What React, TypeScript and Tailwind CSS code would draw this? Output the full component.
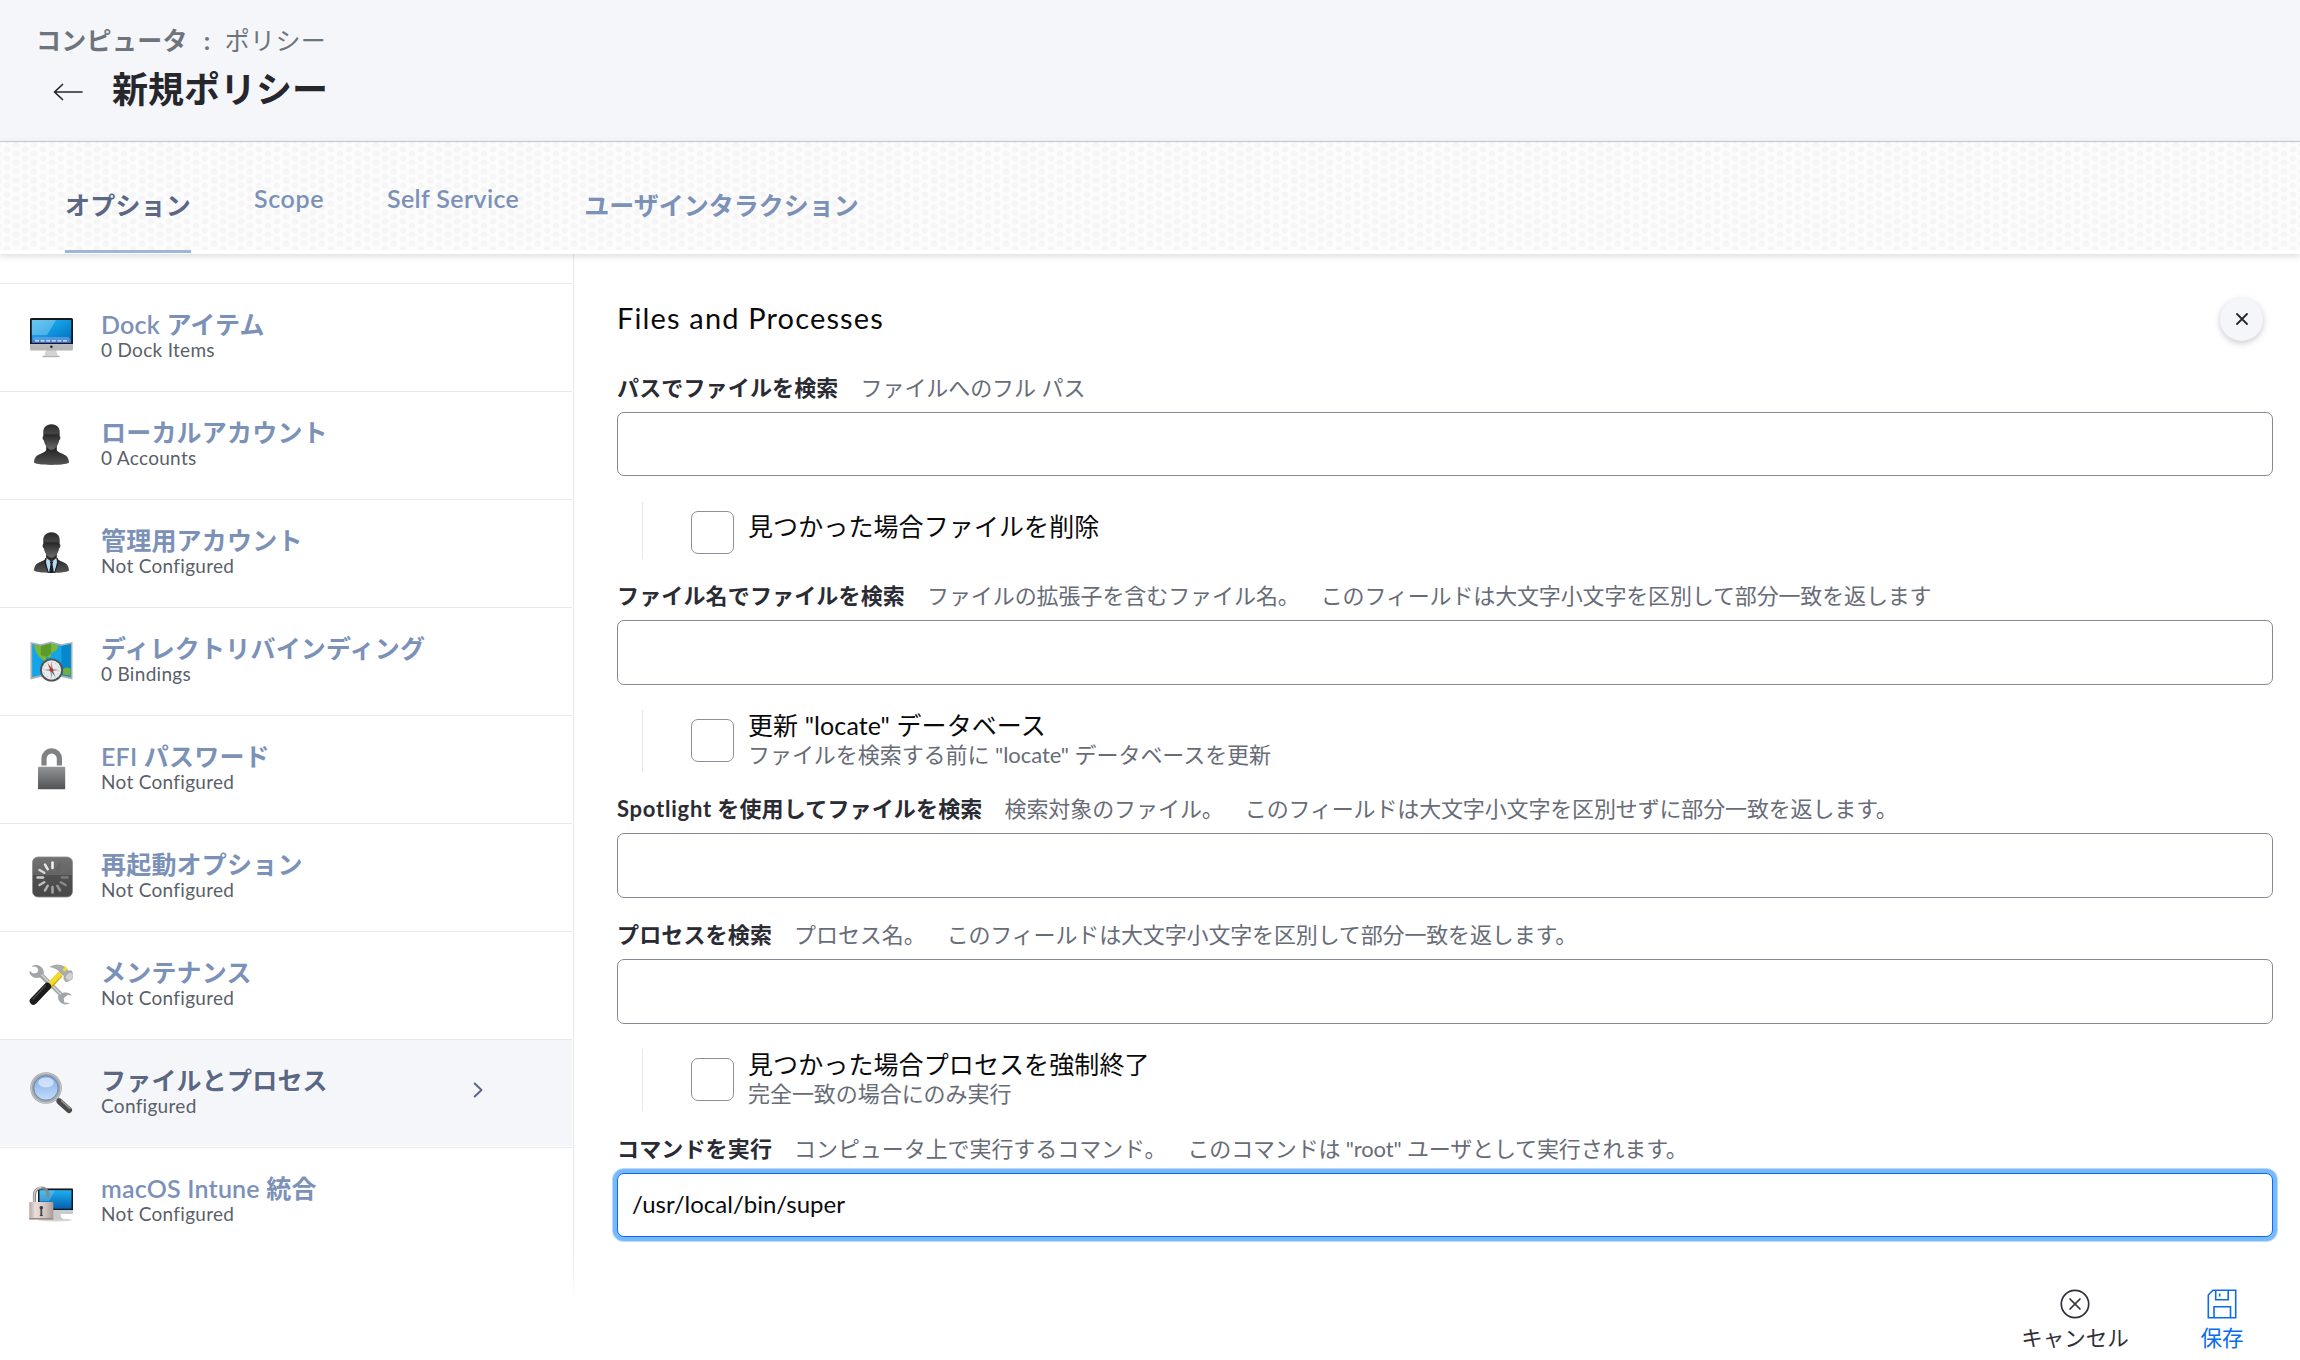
import type { ReactNode } from "react";

function DockIcon() {
  return (
    <svg viewBox="0 0 44 44" className="size-11">
      <defs>
        <linearGradient id="dock-screen" x1="0" y1="0" x2="1" y2="1">
          <stop offset="0" stopColor="#35b5ef" />
          <stop offset="0.5" stopColor="#0f97e0" />
          <stop offset="1" stopColor="#0667b8" />
        </linearGradient>
        <linearGradient id="dock-chin" x1="0" y1="0" x2="0" y2="1">
          <stop offset="0" stopColor="#dcdcdc" />
          <stop offset="1" stopColor="#b4b4b4" />
        </linearGradient>
      </defs>
      <path d="M17 35h10l1.5 5 2 1.2v.8h-17v-.8l2-1.2z" fill="#d2d2d2" />
      <path d="M13.5 41.2h17v1h-17z" fill="#a9a9a9" />
      <rect x="1" y="3" width="43" height="32.6" rx="1.6" fill="url(#dock-chin)" />
      <path d="M1 29V4.6Q1 3 2.6 3h39.8Q44 3 44 4.6V29z" fill="#16181c" />
      <rect x="2.8" y="5" width="39.4" height="22.8" fill="url(#dock-screen)" />
      <path d="M2.8 5H27L18 20H2.8z" fill="#fff" opacity="0.25" />
      <path d="M5 22h35l2 4.500H3z" fill="#6ba3e2" opacity="0.7" />
      <path d="M3.2 25.6h38.6v2.2H3.2z" fill="#4d6fd0" />
      <path d="M6 25.800h34" stroke="#e6f0ff" strokeWidth="1.300" strokeDasharray="4 1.600" />
      <circle cx="22.4" cy="31.8" r="1.3" fill="#26282c" />
    </svg>
  );
}

function Bust({ id }: { id: string }) {
  return (
    <>
      <defs>
        <linearGradient id={id + "-head"} x1="0" y1="0" x2="0" y2="1">
          <stop offset="0" stopColor="#2a2a2b" />
          <stop offset="0.35" stopColor="#454547" />
          <stop offset="0.42" stopColor="#29292a" />
          <stop offset="1" stopColor="#6b6b6c" />
        </linearGradient>
        <linearGradient id={id + "-body"} x1="0" y1="0" x2="0" y2="1">
          <stop offset="0" stopColor="#1b1b1c" />
          <stop offset="0.55" stopColor="#3a3a3b" />
          <stop offset="1" stopColor="#565657" />
        </linearGradient>
      </defs>
      <path
        d="M17.2 22v4.6c0 1.7-1.6 2.6-5 3.8C7.6 32 5 34.6 5 39.6c0 .9 7 2.4 17.5 2.4S40 40.500 40 39.600c0-5-2.600-7.600-7.200-9.200-3.400-1.200-5-2.100-5-3.800V22z"
        fill={"url(#" + id + "-body)"}
      />
      <path
        d="M22.5 1.300c5.600 0 8.300 3.600 8.300 8.300 0 1.500-.2 2.600-.2 3.500 1.200.3 1 3.500-.5 4.400-.8 4.800-4 9.300-7.600 9.300s-6.800-4.500-7.600-9.300c-1.500-.9-1.700-4.100-.5-4.400 0-.9-.2-2-.2-3.500 0-4.700 2.700-8.300 8.300-8.300z"
        fill={"url(#" + id + "-head)"}
      />
    </>
  );
}

function LocalAccountIcon() {
  return (
    <svg viewBox="0 0 44 44" className="size-11">
      <Bust id="local" />
    </svg>
  );
}

function ManagementAccountIcon() {
  return (
    <svg viewBox="0 0 44 44" className="size-11">
      <Bust id="managed" />
      <path d="M17.600 27l4.900 4 4.900-4 .6 4-2.500 11h-6L17 31z" fill="#b5dcf5" />
      <path d="M20.700 30.500h3.600l-.8 2.500 1.500 9h-5l1.500-9z" fill="#1e2022" />
      <path d="M16.800 27l-1 4.500L19.500 42M28.200 27l1 4.500L25.500 42" stroke="#1b1b1c" strokeWidth="1" fill="none" />
    </svg>
  );
}

function DirectoryIcon() {
  return (
    <svg viewBox="0 0 44 44" className="size-11">
      <path d="M1.500 3l10.300 2.200L22 2.600l10.500 2.600L43.500 3v37.500L32.500 38 22 40.500 11.800 38 1.500 40.500z" fill="#a9b0b5" />
      <path d="M3.200 5l8.600 2 10.200-2.500L32.500 7l9.300-2v33l-9.300-2L22 38.500 11.800 36l-8.600 2z" fill="#12a5ea" />
      <path d="M32.500 7l9.300-2v33l-9.300-2z" fill="#0488c9" />
      <path d="M11.800 7L22 4.500v34L11.800 36z" fill="#0b93d8" opacity="0.5" />
      <path d="M4.500 6l7.300 1L22 4.500 29.500 6.500 28 11l-5.500 3-1 4.500-4-.5-1 3.500 5 2-3 1.500-6-5-4.500-5-2.500-6z" fill="#79b83a" />
      <path d="M11.800 7L22 4.500v10l-4.500 3.500-5.700-2z" fill="#5c9a2a" />
      <path d="M34 30l3-1.500 4.500 1v7.500l-7.500-1.500z" fill="#6fb13a" />
      <circle cx="22.500" cy="31" r="11.500" fill="#4f5357" />
      <circle cx="22.500" cy="31" r="9.700" fill="#e9ebec" />
      <circle cx="22.500" cy="31" r="7.700" fill="none" stroke="#b3b6b9" strokeWidth="0.800" strokeDasharray="1.500 2.500" />
      <path d="M22.500 22.500l1.300 7.200 6 1.300-6 1.300-1.300 7.200-1.300-7.200-6-1.300 6-1.300z" fill="#9ea2a5" />
      <path d="M18.500 24l4.900 6.300-1.800 1.400z" fill="#d3282a" />
      <path d="M26.500 38l-4.900-6.300 1.800-1.400z" fill="#6b6f72" />
      <circle cx="22.500" cy="31" r="1.800" fill="#c92a2a" />
    </svg>
  );
}

function LockIcon() {
  return (
    <svg viewBox="0 0 44 44" className="size-11">
      <defs>
        <linearGradient id="efi-lock" x1="0" y1="0" x2="0" y2="1">
          <stop offset="0" stopColor="#949597" />
          <stop offset="1" stopColor="#515254" />
        </linearGradient>
      </defs>
      <path d="M15 18.500v-6.800a7.700 7.900 0 0 1 15.400 0v6.800" fill="none" stroke="#808183" strokeWidth="5.200" />
      <rect x="9" y="19.800" width="27.200" height="22.500" rx="0.800" fill="url(#efi-lock)" />
    </svg>
  );
}

const spokes = [
  "#f4f4f4", "#626262", "#6a6a6a", "#7c7c7c", "#8a8a8a", "#969696",
  "#a4a4a4", "#b2b2b2", "#c0c0c0", "#cecece", "#dadada", "#e8e8e8",
];

function RestartIcon() {
  return (
    <svg viewBox="0 0 44 44" className="size-11">
      <defs>
        <linearGradient id="restart-bg" x1="0" y1="0" x2="0" y2="1">
          <stop offset="0" stopColor="#727272" />
          <stop offset="0.440" stopColor="#646464" />
          <stop offset="0.460" stopColor="#505050" />
          <stop offset="1" stopColor="#484848" />
        </linearGradient>
      </defs>
      <rect x="3.500" y="2" width="40" height="40" rx="5.500" fill="url(#restart-bg)" stroke="#8b8b8b" strokeWidth="0.800" />
      {spokes.map((c, i) => (
        <path key={c} d="M23.500 13V7.500" stroke={c} strokeWidth="2.500" strokeLinecap="round" transform={`rotate(${i * 30} 23.500 22.500)`} />
      ))}
    </svg>
  );
}

function MaintenanceIcon() {
  return (
    <svg viewBox="0 0 44 44" className="size-11">
      <path
        d="M2.500 3.500C5 1.600 9 1.500 12 3.800c2.600 2.200 3.200 4.800 2.700 7.500L33.500 30c3.500-1.200 7.500-.2 9.500 2.600l-4.500-.6-3.800 3.200.6 4.300 5.400.6c-2.500 1.900-6.700 1.900-9.400-.8-2.300-2.200-2.700-4.700-1.800-7.200L11 14.500c-3.300 1-6.500.4-8.700-1.700C.6 11.200.3 9.300.7 7.800L4 10.500l4.300-.8 1-3.500L7 3.700z"
        fill="#a2a5a7"
      />
      <path d="M12.500 11.500l19.500 20" stroke="#d0d2d3" strokeWidth="1.500" />
      <path d="M31.500 11L19 24.500" stroke="#c9a800" strokeWidth="6" />
      <path d="M37 5L18.500 23.500" stroke="#f3da2e" strokeWidth="4.800" />
      <path d="M18.300 23.500L4.500 38" stroke="#1c1c1c" strokeWidth="7.600" strokeLinecap="round" />
      <path d="M16.500 22.500L4 36" stroke="#4a4a4a" strokeWidth="1.300" strokeLinecap="round" />
      <path d="M20.300 4C25 1 32 .4 36.500 4.500l2.700 3 3-.2c1.600 1.800 2.600 4.500 2 7.500-1.700 2.800-5 4.500-7.500 4.200l-2.200-3 .2-3-3.500-3.300C28.500 6.500 25 4.700 20.300 4z" fill="#a9acae" />
      <path d="M33.500 6.500l3-3.500 2 3-3.300 3z" fill="#f3da2e" />
      <ellipse cx="40.500" cy="13.500" rx="3" ry="4" transform="rotate(40 40.500 13.500)" fill="#cfd1d2" />
    </svg>
  );
}

function MagnifierIcon() {
  return (
    <svg viewBox="0 0 44 44" className="size-11">
      <defs>
        <linearGradient id="lens" x1="0" y1="0" x2="0" y2="1">
          <stop offset="0" stopColor="#7ba8e6" />
          <stop offset="1" stopColor="#c9e0fb" />
        </linearGradient>
      </defs>
      <path d="M27 26.500l4 4" stroke="#6d6d6d" strokeWidth="3.500" />
      <path d="M30.500 30.500l9.500 8.500" stroke="#4b4b4b" strokeWidth="6" strokeLinecap="round" />
      <path d="M32.500 29.800l8.500 7.700" stroke="#9a9a9a" strokeWidth="1.500" strokeLinecap="round" />
      <circle cx="17" cy="17" r="14" fill="url(#lens)" stroke="#a4a5a7" strokeWidth="3.600" />
      <circle cx="17" cy="17" r="14.900" fill="none" stroke="#cbccce" strokeWidth="0.900" />
      <circle cx="17" cy="17" r="12.200" fill="none" stroke="#6182b3" strokeWidth="0.900" />
      <ellipse cx="17" cy="11.500" rx="7.700" ry="5" fill="#fff" opacity="0.550" />
    </svg>
  );
}

function IntuneIcon() {
  return (
    <svg viewBox="0 0 44 44" className="size-11">
      <defs>
        <linearGradient id="intune-screen" x1="0" y1="0" x2="0" y2="1">
          <stop offset="0" stopColor="#1fb0f0" />
          <stop offset="1" stopColor="#0560ae" />
        </linearGradient>
        <linearGradient id="intune-lock" x1="0" y1="0" x2="1" y2="0">
          <stop offset="0" stopColor="#b9a7a1" />
          <stop offset="0.250" stopColor="#e9dfdb" />
          <stop offset="0.700" stopColor="#cfc1bc" />
          <stop offset="1" stopColor="#ab9a94" />
        </linearGradient>
      </defs>
      <ellipse cx="26" cy="41" rx="17" ry="1.500" fill="#d5d5d5" />
      <path d="M24 34h7l1.500 5 3 1.500H22z" fill="#c9cacc" />
      <rect x="9" y="9.500" width="35" height="25.500" rx="1" fill="#c9cacc" />
      <path d="M9 10.300q0-.8.8-.8h33.400q.8 0 .8.800V31H9z" fill="#15171a" />
      <rect x="10.500" y="11.200" width="32" height="18.500" fill="url(#intune-screen)" />
      <path d="M10.500 11.200H26L20 22h-9.500z" fill="#fff" opacity="0.200" />
      <path d="M5.500 24v-7.500C5.500 11.700 8.500 9 12.500 9c3.500 0 6.500 2.200 6.500 6.500 0 1-.4 1.700-1 2.200" fill="none" stroke="#85888b" strokeWidth="3.200" />
      <path d="M5.200 24v-7.500C5.200 11.700 8.500 8.400 12.500 8.400" fill="none" stroke="#d6d8da" strokeWidth="1.100" />
      <rect x="0.300" y="23" width="24" height="17.500" rx="0.800" fill="url(#intune-lock)" />
      <path d="M0.300 39h24v1.500h-24z" fill="#978983" />
      <path d="M12.300 27.500v9" stroke="#45464a" strokeWidth="1.800" />
      <circle cx="12.300" cy="28.800" r="1.800" fill="#3c3d41" />
      <path d="M10.800 36.500h3" stroke="#45464a" strokeWidth="1.200" />
    </svg>
  );
}

type Payload = { icon: ReactNode; latin?: string; label: string; status: string; selected?: boolean };

const payloads: Payload[] = [
  { icon: <DockIcon />, latin: "Dock", label: "アイテム", status: "0 Dock Items" },
  { icon: <LocalAccountIcon />, label: "ローカルアカウント", status: "0 Accounts" },
  { icon: <ManagementAccountIcon />, label: "管理用アカウント", status: "Not Configured" },
  { icon: <DirectoryIcon />, label: "ディレクトリバインディング", status: "0 Bindings" },
  { icon: <LockIcon />, latin: "EFI", label: "パスワード", status: "Not Configured" },
  { icon: <RestartIcon />, label: "再起動オプション", status: "Not Configured" },
  { icon: <MaintenanceIcon />, label: "メンテナンス", status: "Not Configured" },
  { icon: <MagnifierIcon />, label: "ファイルとプロセス", status: "Configured", selected: true },
  { icon: <IntuneIcon />, latin: "macOS Intune", label: "統合", status: "Not Configured" },
];

function SidebarRow({ icon, latin, label, status, selected }: Payload) {
  return (
    <li
      className={
        "flex h-[108px] w-[572px] border-t border-[#e7e9ed] pl-[29px] " +
        (selected ? "bg-[#f4f6fa] bg-clip-padding shadow-[inset_0_-1px_0_#fff]" : "")
      }
    >
      <span className="mt-[31px] block size-11">{icon}</span>
      <div className="ml-7 w-[372px] pt-[26px] whitespace-nowrap">
        <p className={"text-[25px] leading-[29px] font-semibold tracking-[0.2px] " + (selected ? "text-[#5b6885] [text-shadow:1px_1px_0_#fff]" : "text-[#7b91b8]")}>
          {latin ? latin + " " : ""}
          {label}
        </p>
        <p className="pt-px text-[19px] leading-5 tracking-[0.3px] text-[#5a5f69]">{status}</p>
      </div>
      {selected && (
        <svg viewBox="0 0 10 16" className="mt-[42px] h-4 w-2.5" fill="none" stroke="#5b6885" strokeWidth="2" strokeLinecap="round" strokeLinejoin="round">
          <path d="M1.700 1.500L8.500 8l-6.800 6.500" />
        </svg>
      )}
    </li>
  );
}

function Label({ title, hint, more, className }: { title: ReactNode; hint: string; more?: string; className: string }) {
  return (
    <div className={"flex text-[22px] leading-[30px] whitespace-nowrap " + className}>
      <span className="font-bold tracking-[0.15px] text-[#2a2b33]">{title}</span>
      <span className="ml-[22px] tracking-[-0.07px] text-[#676c77]">{hint}</span>
      {more && <span className="ml-[21px] tracking-[-0.15px] text-[#676c77]">{more}</span>}
    </div>
  );
}

function CheckOption({ title, note, className }: { title: string; note?: string; className: string }) {
  return (
    <div className={"ml-[25px] flex border-l border-[#e3e6ec] pl-12 whitespace-nowrap " + className}>
      <span className="mt-[9px] block size-[43px] rounded-[7px] border border-[#8b8f9b] bg-white" />
      <div className="ml-[14px] text-[#0a0a0c]">
        <p className={"text-[25px] leading-[30px] tracking-[0.1px] " + (note ? "" : "mt-[9px]")}>{title}</p>
        {note && <p className="text-[22px] leading-[30px] tracking-[-0.05px] text-[#676c77]">{note}</p>}
      </div>
    </div>
  );
}

function Field({ className }: { className: string }) {
  return <input className={"mt-[9px] block w-[1656px] rounded-[7px] border border-[#868a92] bg-white " + className} />;
}

export default function App() {
  return (
    <div className="flex h-[1360px] w-[2300px] flex-col overflow-hidden bg-white font-['Lato','Noto_Sans_CJK_JP',sans-serif]">
      <header className="h-[142px] border-b border-[#c8ced8] bg-[#f4f6fa] whitespace-nowrap">
        <div className="flex pt-[25px] pl-9 text-[25px] leading-[30px] tracking-[0.3px] text-[#6e747b]">
          <span className="font-bold">コンピュータ</span>
          <span className="w-[37px] pl-4 font-bold">:</span>
          <span>ポリシー</span>
        </div>
        <div className="flex items-center pl-[53px]">
          <svg viewBox="0 0 30 18" className="mt-1 h-[18px] w-[30px]" fill="none" stroke="#26272c" strokeWidth="1.700" strokeLinecap="round" strokeLinejoin="round">
            <path d="M29 9H1.500M9.500 1.500L1.500 9l8 7.500" />
          </svg>
          <h1 className="ml-[29px] text-[36px] leading-[69px] font-bold text-[#26272c]">新規ポリシー</h1>
        </div>
      </header>

      <nav className="relative z-10 flex h-28 border-b-4 border-white bg-[#fcfcfc] bg-[radial-gradient(4px_3.600px_at_9px_4.500px,#f7f7f7_0%,#f4f4f5_60%,#f9f9f9_85%,transparent_100%),radial-gradient(4px_3.600px_at_9px_4.500px,#f7f7f7_0%,#f4f4f5_60%,#f9f9f9_85%,transparent_100%)] bg-size-[18px_9px] bg-position-[16px_3px,7px_7px] pl-[65px] text-[25px] font-semibold whitespace-nowrap text-[#7b91b8] shadow-[0_2px_7px_rgba(60,70,90,0.2)]">
        <span className="h-[111px] border-b-[3px] border-[#9db7d9] pt-12 leading-[30px] tracking-[0.2px] text-[#5b6885]">オプション</span>
        <span className="ml-[63px] pt-[41px] leading-[30px] tracking-[0.6px]">Scope</span>
        <span className="ml-[63px] pt-[41px] leading-[30px] tracking-[0.35px]">Self Service</span>
        <span className="ml-[65px] pt-12 leading-[30px]">ユーザインタラクション</span>
      </nav>

      <div className="flex min-h-0 flex-1">
        <div className="flex">
          <ul className="w-[573px] pt-[29px]">
            {payloads.map((p) => (
              <SidebarRow key={p.label} {...p} />
            ))}
          </ul>
          <div className="h-[1050px] w-px bg-linear-to-b from-[#e4e7ec] from-94% to-transparent" />
        </div>

        <main className="ml-[43px] flex w-[1656px] flex-col">
          <div className="flex h-[82px] justify-between">
            <h2 className="mt-[46px] text-[29px] leading-9 tracking-[1.15px] text-[#0a0a0c]">Files and Processes</h2>
            <button className="mt-11 mr-[10px] flex size-[43px] items-center justify-center rounded-full bg-[#f4f6fa] shadow-[0_2px_6px_rgba(30,35,50,0.25)]">
              <svg viewBox="0 0 12 12" className="mb-px size-3" fill="none" stroke="#26272c" strokeWidth="1.800" strokeLinecap="round">
                <path d="M1 1l10 10M11 1L1 11" />
              </svg>
            </button>
          </div>

          <Label className="mt-[37px]" title="パスでファイルを検索" hint="ファイルへのフル パス" />
          <Field className="h-16" />
          <CheckOption className="mt-[26px] h-[57px]" title="見つかった場合ファイルを削除" />

          <Label className="mt-[22px]" title="ファイル名でファイルを検索" hint="ファイルの拡張子を含むファイル名。" more="このフィールドは大文字小文字を区別して部分一致を返します" />
          <Field className="h-[65px]" />
          <CheckOption className="mt-[25px] h-[62px]" title={'更新 "locate" データベース'} note={'ファイルを検索する前に "locate" データベースを更新'} />

          <Label
            className="mt-[22px]"
            title={
              <>
                <span className="tracking-[0.750px]">Spotlight</span> を使用してファイルを検索
              </>
            }
            hint="検索対象のファイル。"
            more="このフィールドは大文字小文字を区別せずに部分一致を返します。"
          />
          <Field className="h-[65px]" />

          <Label className="mt-[22px]" title="プロセスを検索" hint="プロセス名。" more="このフィールドは大文字小文字を区別して部分一致を返します。" />
          <Field className="h-[65px]" />
          <CheckOption className="mt-[25px] h-[62px]" title="見つかった場合プロセスを強制終了" note="完全一致の場合にのみ実行" />

          <Label className="mt-[23px]" title="コマンドを実行" hint="コンピュータ上で実行するコマンド。" more={'このコマンドは "root" ユーザとして実行されます。'} />
          <input
            defaultValue="/usr/local/bin/super"
            className="mt-[9px] block h-16 w-[1656px] rounded-[7px] border border-[#0a6cea] bg-white px-[14px] pb-1 text-[24px] text-[#0a0a0c] shadow-[0_0_0_4px_#77b8ff,0_0_0_5px_#b9d9fd] outline-none"
          />

          <footer className="mt-[52px] flex justify-end pr-[29px] text-[21.500px] leading-[30px] whitespace-nowrap">
            <button className="flex w-[108px] flex-col items-center text-[#2f3037]">
              <svg viewBox="0 0 30 30" className="size-[30px]" fill="none" stroke="currentColor" strokeWidth="1.700" strokeLinecap="round">
                <circle cx="15" cy="15" r="13.700" />
                <path d="M10 10l10 10M20 10L10 20" />
              </svg>
              <span className="mt-1">キャンセル</span>
            </button>
            <button className="ml-[71px] flex w-11 flex-col items-center text-[#0a6cea]">
              <svg viewBox="0 0 30 30" className="size-[30px]" fill="none" stroke="currentColor" strokeWidth="1.600">
                <path d="M6 1.300h22.700v27.400H1.300V6z" />
                <path d="M8.700 1.300v9.500h12.500V1.300M7 28.700V17.800h16.500v10.900M12.700 4.500v3" />
              </svg>
              <span className="mt-1">保存</span>
            </button>
          </footer>
        </main>
      </div>
    </div>
  );
}
